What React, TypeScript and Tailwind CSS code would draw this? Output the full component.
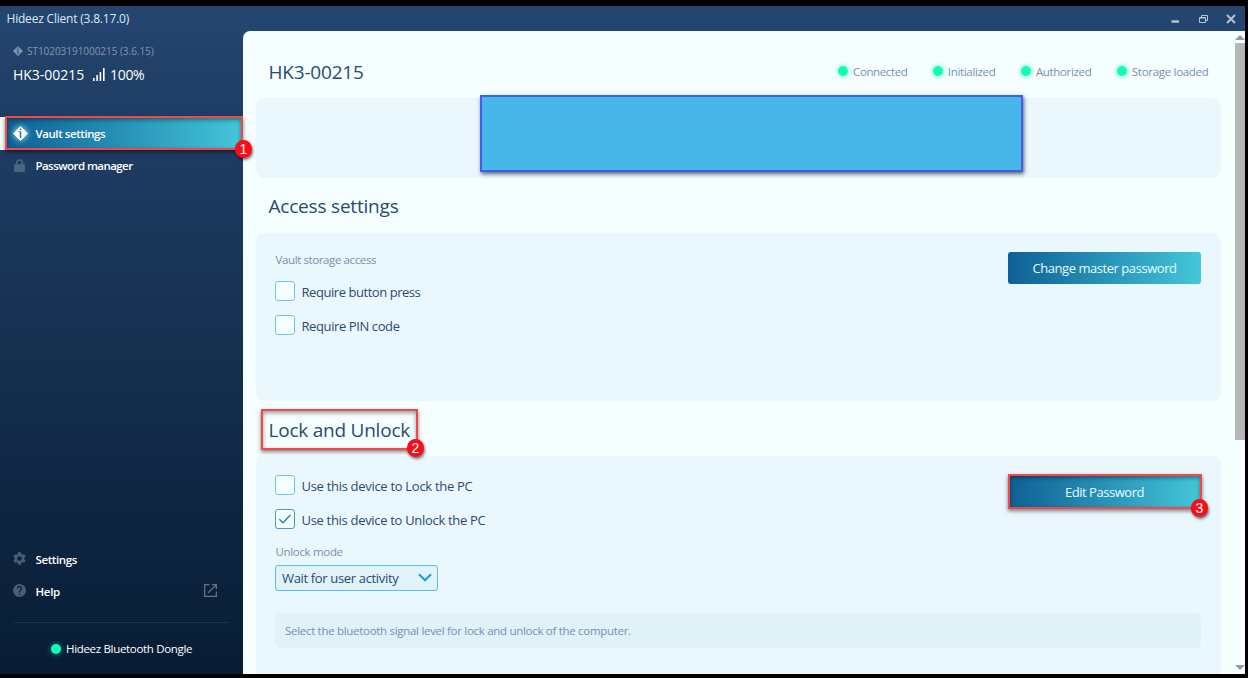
import React from "react";

function Diamond({ className, hole }: { className: string; hole: string }) {
  return (
    <svg viewBox="0 0 16 16" className={className} aria-hidden="true">
      <path d="M8 .6 15.4 8 8 15.4.6 8Z" fill="currentColor" stroke="currentColor" strokeWidth="1" strokeLinejoin="round" />
      <rect x="7.200" y="2.600" width="1.600" height="1.700" fill={hole} />
      <path d="M6.100 5.600H8.800V12.800H7.200V6.700H6.100Z" fill={hole} />
    </svg>
  );
}

function Dot() {
  return <span className="block size-[10px] shrink-0 rounded-full bg-[#0dffb4] shadow-[0_0_5px_1px_rgba(13,235,170,0.4)]" />;
}

function Status({ label, className }: { label: string; className: string }) {
  return (
    <div className="flex h-5 items-center gap-[5px]">
      <Dot />
      <span className={`block pt-px text-[11.5px] text-[#7790ae] ${className}`}>{label}</span>
    </div>
  );
}

function Badge({ n, className }: { n: number; className: string }) {
  return (
    <span className={`absolute z-20 flex h-[18px] w-[17px] items-center justify-center rounded-full bg-[#fb0d18] font-['Liberation_Sans',sans-serif] text-[14px] font-normal leading-none text-white shadow-[1px_2px_3px_rgba(0,0,0,0.55)] ${className}`}>
      {n}
    </span>
  );
}

function Outline({ className }: { className: string }) {
  return (
    <span className={`pointer-events-none absolute z-10 border-2 border-[#f4474b] shadow-[0_2px_4px_rgba(0,0,0,0.5),inset_0_2px_4px_rgba(0,0,0,0.4)] ${className}`} />
  );
}

function Check({ label, checked, className }: { label: string; checked?: boolean; className: string }) {
  return (
    <div className="flex h-5 items-center gap-[6.500px]">
      <span className={`flex size-5 shrink-0 items-center justify-center rounded-[3px] border bg-[#f5ffff] ${checked ? "border-[#4a9bbd]" : "border-[#6fc5e9]"}`}>
        {checked && (
          <svg viewBox="0 0 14 12" className="h-3 w-3.5" fill="none" stroke="#2387b0" strokeWidth="1.5">
            <path d="M1.3 6.2 5 9.8 12.4 2" />
          </svg>
        )}
      </span>
      <span className={`whitespace-nowrap pt-[3px] text-[13px] text-[#2a4a72] ${className}`}>{label}</span>
    </div>
  );
}

function Sidebar() {
  return (
    <aside className="flex w-[243px] shrink-0 flex-col text-white">
      <div className="mt-[14px] flex h-[12px] items-center gap-1 pl-[13px] text-[#8296af]">
        <Diamond className="mb-px size-[10px]" hole="#23426b" />
        <span className="pt-px text-[10px] leading-[11px] tracking-[-0.04px] whitespace-nowrap">ST10203191000215 (3.6.15)</span>
      </div>
      <div className="mt-[3px] flex h-[22px] items-center pl-[13px] pt-[6px] text-[14px]">
        <span className="w-[80px] tracking-[-0.02px]">HK3-00215</span>
        <svg viewBox="0 0 12 13" className="h-[13px] w-3" fill="#fff">
          <rect x="0" y="10" width="1.600" height="3" />
          <rect x="3.300" y="7" width="1.600" height="6" />
          <rect x="6.600" y="4" width="1.600" height="9" />
          <rect x="10" y="0" width="1.600" height="13" />
        </svg>
        <span className="ml-[5px] tracking-[-0.3px]">100%</span>
      </div>
      <nav className="mt-[35px] text-[11.5px] font-semibold">
        <div className="relative flex h-[33px] items-center bg-gradient-to-r from-[#0e5e94] to-[#44c7d9] pl-[13px]">
          <span className="absolute left-0 top-0 h-full w-[5px] bg-[#f5ffff]" />
          <Diamond className="size-[15px] drop-shadow-[0_0_3px_#bff]" hole="#2479a8" />
          <span className="ml-[7.500px] tracking-[-0.43px]">Vault settings</span>
          <Outline className="-top-px bottom-0 left-[5px] right-0" />
          <Badge n={1} className="-right-[9px] top-[23px]" />
        </div>
        <div className="flex h-[33px] items-center pl-[13px]">
          <svg viewBox="0 0 12 14" className="mb-0.5 h-[14px] w-[13px] text-[#4c6584]" fill="currentColor">
            <path d="M2.4 5.3V3.8a3.6 3.6 0 0 1 7.2 0v1.5h.7c.7 0 1.2.5 1.2 1.2v5.3c0 .7-.5 1.2-1.2 1.2H1.7C1 13 .5 12.500.5 11.800V6.500c0-.7.5-1.200 1.200-1.200Zm1.500 0h4.200V3.800a2.100 2.100 0 0 0-4.200 0Z" />
          </svg>
          <span className="mb-0.5 ml-[9.500px] tracking-[-0.56px]">Password manager</span>
        </div>
      </nav>
      <div className="mt-auto text-[11.5px] font-semibold">
        <div className="flex h-8 items-center pl-[13px]">
          <svg viewBox="2 2 20 20" className="mb-0.5 size-[13px] text-[#4b5e76]" fill="currentColor">
            <path d="M19.140 12.940c.040-.300.060-.610.060-.940s-.020-.640-.070-.940l2.030-1.580a.490.490 0 0 0 .120-.610l-1.920-3.320a.490.490 0 0 0-.590-.220l-2.390.960a7 7 0 0 0-1.620-.940l-.360-2.540a.480.480 0 0 0-.480-.410h-3.840a.480.480 0 0 0-.470.410l-.360 2.540a7 7 0 0 0-1.620.940l-2.390-.960a.480.480 0 0 0-.590.220L2.740 8.870a.480.480 0 0 0 .120.610l2.030 1.580a7 7 0 0 0 0 1.880l-2.030 1.580a.490.490 0 0 0-.120.610l1.920 3.320c.120.220.370.290.590.220l2.390-.960c.500.380 1.030.700 1.620.940l.360 2.540c.050.240.240.410.480.410h3.840c.240 0 .440-.170.470-.410l.360-2.540a7 7 0 0 0 1.620-.940l2.390.960c.220.080.470 0 .590-.220l1.920-3.320a.480.480 0 0 0-.120-.610ZM12 15.600A3.600 3.600 0 1 1 12 8.400a3.600 3.600 0 0 1 0 7.200Z" />
          </svg>
          <span className="ml-[9.500px] pt-px tracking-[-0.4px]">Settings</span>
        </div>
        <div className="flex h-8 items-center pl-[13px] pr-[26px]">
          <svg viewBox="2 2 20 20" className="mb-px size-[13px] text-[#4b5e76]" fill="currentColor">
            <path d="M12 2a10 10 0 1 0 0 20 10 10 0 0 0 0-20Zm1 17h-2v-2h2Zm2.070-7.750-.900.920C13.450 12.900 13 13.500 13 15h-2v-.500c0-1.100.450-2.100 1.170-2.830l1.240-1.260A2 2 0 1 0 10 9H8a4 4 0 1 1 7.070 2.250Z" />
          </svg>
          <span className="ml-[9.500px] pt-px tracking-[-0.3px]">Help</span>
          <svg viewBox="0 0 14 14" className="mb-px ml-auto size-[13px] text-[#617086]" fill="none" stroke="currentColor" strokeWidth="1.4">
            <path d="M6 .7H.7v12.600h12.600V8M8.500.7h4.800v4.800M13 1 4.500 9.500" />
          </svg>
        </div>
      </div>
      <div className="mx-[13px] mt-[15px] border-t border-[#1c314b]" />
      <div className="flex h-[51px] items-center gap-[5px] pl-[51px] text-[11.5px]">
        <Dot />
        <span className="pt-px tracking-[-0.32px] whitespace-nowrap">Hideez Bluetooth Dongle</span>
      </div>
    </aside>
  );
}

function Main() {
  return (
    <main className="relative flex min-w-0 flex-1 overflow-hidden rounded-tl-[7px] bg-[#f5ffff]">
      <div className="flex min-w-0 flex-1 flex-col pl-[13px] pr-[13px] text-[#2a4a72]">
        <header className="flex h-[67px] shrink-0 items-center justify-between pl-[12.500px] pr-[12.500px] pt-[15px]">
          <h1 className="text-[19px] tracking-[-0.2px]">HK3-00215</h1>
          <div className="mb-0.5 flex gap-[25.500px]">
            <Status label="Connected" className="tracking-[-0.4px]" />
            <Status label="Initialized" className="tracking-[-0.33px]" />
            <Status label="Authorized" className="tracking-[-0.35px]" />
            <Status label="Storage loaded" className="tracking-[-0.3px]" />
          </div>
        </header>
        <section className="relative h-20 shrink-0 rounded-lg bg-[#eaf8fd]">
          <div className="absolute -top-[3px] left-[224px] h-[77px] w-[543px] border-2 border-[#425cf2] bg-[#46b7e8] shadow-[1px_2px_4px_rgba(0,0,0,0.6)]" />
        </section>
        <h2 className="flex h-[55px] shrink-0 items-center pl-[12.500px] pt-0.5 text-[19px] tracking-[-0.2px]">Access settings</h2>
        <section className="flex h-[168px] shrink-0 justify-between rounded-lg bg-[#eaf8fd] pl-[19px] pr-5 pt-[19px]">
          <div className="flex flex-col">
            <span className="h-[29px] pl-[0.500px] text-[11.5px] leading-4 tracking-[-0.39px] text-[#7790ae]">Vault storage access</span>
            <Check label="Require button press" className="tracking-[-0.45px]" />
            <div className="h-[14px]" />
            <Check label="Require PIN code" className="tracking-[-0.4px]" />
          </div>
          <button className="flex h-8 w-[193px] items-center justify-center rounded-[3px] bg-gradient-to-r from-[#0e6095] to-[#44c7d9] pt-0.5 text-[13px] tracking-[-0.45px] text-[#e8fbff]">Change master password</button>
        </section>
        <div className="flex h-[55px] shrink-0 items-start pl-[5px] pt-2">
          <div className="relative flex h-[41px] w-[157px] items-center pl-[7.500px] pt-px">
            <h2 className="whitespace-nowrap text-[19px] tracking-[-0.23px]">Lock and Unlock</h2>
            <Outline className="inset-0" />
            <Badge n={2} className="-right-[6px] bottom-[-7px]" />
          </div>
        </div>
        <section className="flex h-[240px] shrink-0 flex-col rounded-lg bg-[#eaf8fd] pl-[19px] pr-5 pt-[19px]">
          <div className="flex justify-between">
            <div className="flex flex-col gap-[14px]">
              <Check label="Use this device to Lock the PC" className="tracking-[-0.3px]" />
              <Check label="Use this device to Unlock the PC" checked className="tracking-[-0.31px]" />
            </div>
            <div className="relative -mt-px h-[35px] w-[193px]">
              <button className="flex h-full w-full items-center justify-center bg-gradient-to-r from-[#0e6095] to-[#44c7d9] pt-0.5 text-[13px] tracking-[-0.45px] text-[#e8fbff]">Edit Password</button>
              <Outline className="-right-px bottom-0 left-0 top-0" />
              <Badge n={3} className="-right-[7px] bottom-[-8px]" />
            </div>
          </div>
          <span className="mt-[14px] h-[22px] pl-[0.500px] pt-px text-[11.5px] leading-4 tracking-[-0.33px] text-[#7790ae]">Unlock mode</span>
          <div className="flex h-[26px] w-[163px] items-center justify-between rounded-[3px] border border-[#5bbde6] bg-[#e1f2f9] pl-[6px] pr-[5px] text-[13px]">
            <span className="pt-0.5 tracking-[-0.34px]">Wait for user activity</span>
            <svg viewBox="0 0 14 9" className="mb-px h-[9px] w-[14px]" fill="none" stroke="#21a0df" strokeWidth="2.300">
              <path d="M1 1.200 7 7.200 13 1.200" />
            </svg>
          </div>
          <p className="mt-[22px] flex h-[35px] items-center rounded-[6px] bg-[#e0f1f8] pl-[10px] pt-px text-[11.5px] tracking-[-0.3px] text-[#7790ae]">Select the bluetooth signal level for lock and unlock of the computer.</p>
        </section>
      </div>
      <div className="flex w-[11px] shrink-0 flex-col items-center">
        <svg viewBox="0 0 10 5" className="mt-1 h-[5px] w-[10px]" fill="#969a9a"><path d="M0 5 5 0 10 5Z" /></svg>
        <div className="mt-[3px] h-[397px] w-[10px] bg-[#b5b7b7]" />
        <svg viewBox="0 0 10 5" className="mb-1 mt-auto h-[5px] w-[10px]" fill="#969a9a"><path d="M0 0 5 5 10 0Z" /></svg>
      </div>
    </main>
  );
}

export default function App() {
  return (
    <div className="h-[678px] w-[1248px] overflow-hidden bg-black pb-1 pr-[3px] pt-[6px] font-['Open_Sans','Noto_Sans',sans-serif]">
      <div className="flex h-full flex-col bg-gradient-to-b from-[#24456f] to-[#081c34]">
        <div className="flex h-[25px] shrink-0 items-center bg-[#24456f] pl-[6.500px] pr-[9px] text-[12px] text-[#dfe9f5]">
          <span className="tracking-[-0.2px]">Hideez Client (3.8.17.0)</span>
          <svg viewBox="0 0 66 12" className="ml-auto h-3 w-[66px]" fill="none" stroke="#b5c3d5">
            <path d="M1.500 8.500H9" strokeWidth="2.500" />
            <path d="M29.500 4.500h6v5h-6ZM31.500 4.500v-2h6v5h-2M29.500 5h6" />
            <path d="m57 2 8 8m0-8-8 8" strokeWidth="2" />
          </svg>
        </div>
        <div className="flex min-h-0 flex-1">
          <Sidebar />
          <Main />
        </div>
      </div>
    </div>
  );
}
